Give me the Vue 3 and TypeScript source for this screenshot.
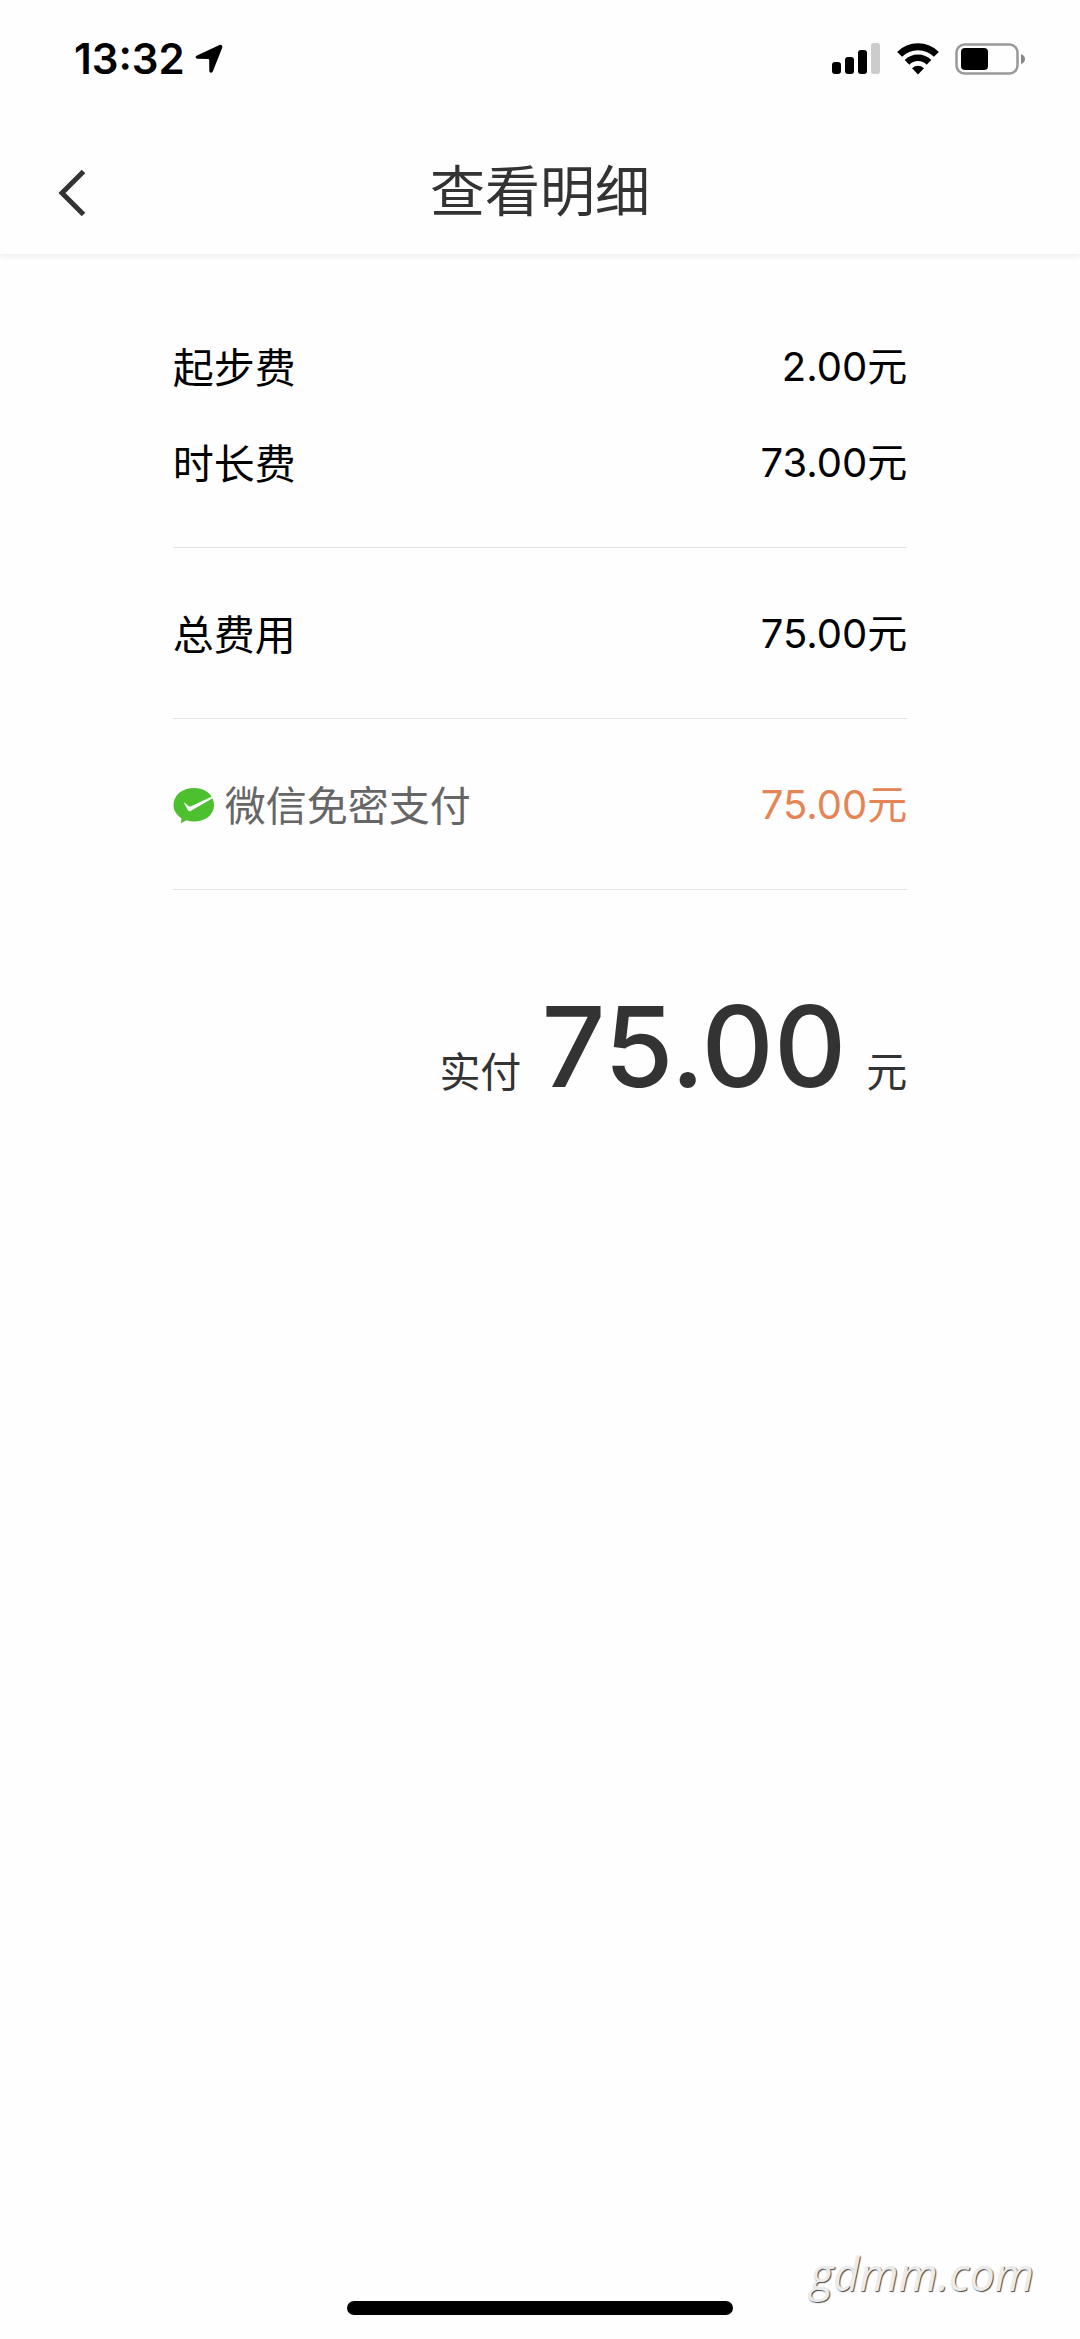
<script setup lang="ts">
interface FeeLine {
  label: string
  amount: string
}

interface FeeGroup {
  lines: FeeLine[]
  wechat?: boolean
}

const groups: FeeGroup[] = [
  {
    lines: [
      { label: '起步费', amount: '2.00元' },
      { label: '时长费', amount: '73.00元' },
    ],
  },
  { lines: [{ label: '总费用', amount: '75.00元' }] },
  { lines: [{ label: '微信免密支付', amount: '75.00元' }], wechat: true },
]
</script>

<template>
  <div class="page">
    <div class="status">
      <div class="status-left">
        <span class="clock">13:32</span>
        <svg class="arrow" viewBox="0 0 28 30" width="28" height="30" aria-hidden="true">
          <path d="M2 11.500 24.500 1Q27.600 .3 27.300 3.500L17.800 27.500Q16 30 14.300 27.500L14.200 15.800Q14 15 13.200 15L2 14.700Q-.8 13.300 2 11.500Z" />
        </svg>
      </div>
      <div class="status-right">
        <svg viewBox="0 0 50 32" width="50" height="32" aria-hidden="true">
          <rect x="1" y="19" width="9" height="12" rx="3" />
          <rect x="14" y="14" width="9" height="17" rx="3" />
          <rect x="27" y="7" width="9" height="24" rx="3" />
          <rect x="40" y="0" width="9" height="31" rx="3" fill="#ccc" />
        </svg>
        <svg viewBox="0 0 42 32" width="42" height="32" aria-hidden="true">
          <g fill="none" stroke="#000" stroke-width="7">
            <path d="M2.600 11.400A26 26 0 0 1 39.400 11.400" />
            <path d="M10 19.400A15.500 15.500 0 0 1 32 19.400" stroke-width="6.500" />
          </g>
          <path d="M15 25.200Q21 20.400 27 25.200L21 31.500Z" />
        </svg>
        <svg viewBox="0 0 72 32" width="72" height="32" aria-hidden="true">
          <rect x="1.500" y="1.500" width="61" height="29" rx="8" fill="none" stroke="#999" stroke-width="2.500" />
          <rect x="6" y="5" width="27" height="22" rx="4" />
          <path d="M66 11Q70 12.500 70 16T66 21Z" fill="#888" />
        </svg>
      </div>
    </div>

    <header class="nav">
      <button class="back" type="button" aria-label="返回">
        <svg viewBox="0 0 28 48" width="28" height="48" aria-hidden="true">
          <path d="M25.500 2.500 4 24 25.500 45.500" fill="none" stroke="#333" stroke-width="5" />
        </svg>
      </button>
      <h1 class="title">查看明细</h1>
    </header>

    <main class="content">
      <dl v-for="(group, i) in groups" :key="i" class="group" :class="{ wechat: group.wechat }">
        <div v-for="line in group.lines" :key="line.label" class="line">
          <dt class="label">
            <svg v-if="group.wechat" viewBox="0 0 42 36" width="42" height="36" aria-hidden="true">
              <path d="M21 0C32.600 0 41 7.300 41 17S32.600 33.500 21 33.500Q17 33.500 13.500 32.300L8 35.300 8.500 30.200C3.500 27 .5 22.500 .5 17 .5 7.300 9.400 0 21 0Z" fill="#4cc02f" />
              <path d="M10.500 14 16 18.300Q17 18.800 18.200 18.200L41 7.500V9.500L17.500 23Q15.800 23.700 14.800 22Z" fill="#fff" />
            </svg>
            <span class="name">{{ line.label }}</span>
          </dt>
          <dd class="amount">{{ line.amount }}</dd>
        </div>
      </dl>

      <p class="paid">
        <span>实付</span>
        <strong class="sum">75.00</strong>
        <span>元</span>
      </p>
    </main>

    <div class="home-bar"></div>
    <span class="watermark">gdmm.com</span>
  </div>
</template>

<style>
body {
  margin: 0;
  background: #fefefe;
}
</style>

<style scoped>
.page {
  position: relative;
  display: flex;
  flex-direction: column;
  min-height: 100vh;
  font-family: Inter, "Noto Sans CJK SC", sans-serif;
  font-size: 41px;
  color: #000;
}

.status {
  display: flex;
  align-items: center;
  justify-content: space-between;
  box-sizing: border-box;
  height: 124px;
  padding: 0 53px 6px 74px;
}

.status-left,
.status-right {
  display: flex;
  align-items: center;
}

.status-left {
  gap: 10px;
}

.status-right {
  gap: 16px;
}

.clock {
  font-size: 42px;
  font-weight: 600;
  line-height: 48px;
}

.nav {
  display: grid;
  grid-template-columns: 1fr auto 1fr;
  align-items: center;
  box-sizing: border-box;
  height: 130px;
  padding-top: 4px;
  box-shadow: 0 3px 6px #f0f0f0;
}

.back {
  justify-self: start;
  display: flex;
  margin: 0 0 0 34px;
  padding: 16px 24px 12px;
  border: 0;
  background: none;
}

.title {
  margin: 0;
  font-size: 55px;
  font-weight: 400;
  line-height: 80px;
  color: #333;
}

.content {
  padding: 27px 16% 0;
}

.group {
  margin: 0;
  padding: 39px 0 35px;
  border-bottom: 1px solid #e2e2e2;
}

.line {
  display: flex;
  align-items: center;
  justify-content: space-between;
  height: 96px;
}

.label {
  display: flex;
  align-items: center;
  gap: 10px;
}

.name {
  padding-bottom: 6px;
}

.amount {
  margin: 0;
  padding-bottom: 8px;
  font-size: 40px;
}

.wechat .label {
  color: #666;
}

.wechat .amount {
  color: #e58455;
}

.paid {
  display: flex;
  align-items: baseline;
  justify-content: flex-end;
  gap: 20px;
  margin: 88px 0 0;
  color: #333;
}

.sum {
  font-size: 112px;
  font-weight: 500;
  line-height: 136px;
}

.home-bar {
  width: 386px;
  height: 14px;
  margin: auto auto 24px;
  border-radius: 7px;
  background: #000;
}

.watermark {
  position: absolute;
  right: 46px;
  bottom: 37px;
  font: italic 45px/56px "Open Sans", sans-serif;
  color: #ebebeb;
  text-shadow: 1px 1px 1px #444;
}
</style>
